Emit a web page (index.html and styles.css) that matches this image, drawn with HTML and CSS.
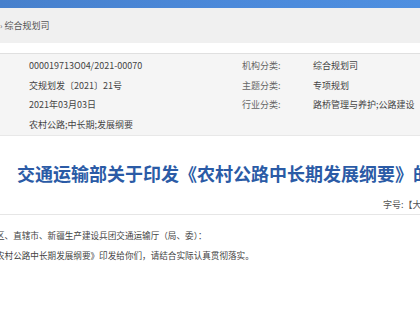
FILE: index.html
```html
<!DOCTYPE html>
<html lang="zh-CN">
<head>
    <meta charset="UTF-8">
    <meta name="viewport" content="width=device-width, initial-scale=1.0">
    <title>交通运输部关于印发《农村公路中长期发展纲要》的通知</title>
    <link rel="stylesheet" href="styles.css">
</head>
<body>
    <div class="topbar"></div>

    <div class="crumb">
        <span class="crumb-sep">›</span>
        <span>综合规划司</span>
    </div>

    <div class="meta">
        <div class="meta-col meta-left">
            <div class="meta-row"><span class="meta-val">000019713O04/2021-00070</span></div>
            <div class="meta-row"><span class="meta-val">交规划发〔2021〕21号</span></div>
            <div class="meta-row"><span class="meta-val">2021年03月03日</span></div>
            <div class="meta-row"><span class="meta-val">农村公路;中长期;发展纲要</span></div>
        </div>
        <div class="meta-col">
            <div class="meta-row"><span class="meta-label">机构分类:</span><span class="meta-val">综合规划司</span></div>
            <div class="meta-row"><span class="meta-label">主题分类:</span><span class="meta-val">专项规划</span></div>
            <div class="meta-row"><span class="meta-label">行业分类:</span><span class="meta-val">路桥管理与养护;公路建设</span></div>
        </div>
    </div>

    <div class="article">
        <h1 class="title">交通运输部关于印发《农村公路中长期发展纲要》的通知</h1>
        <div class="tools">字号:【大 中 小】</div>
        <div class="content">
            <p>各省、自治区、直辖市、新疆生产建设兵团交通运输厅（局、委）：</p>
            <p class="indent">现将《农村公路中长期发展纲要》印发给你们，请结合实际认真贯彻落实。</p>
        </div>
    </div>
</body>
</html>
```

FILE: styles.css
```css
html, body {
    overflow: hidden;
}
body {
    margin: 0;
    font-family: "Noto Sans CJK SC", "Noto Sans", sans-serif;
    color: #444;
    background: #fff;
}
.topbar {
    height: 8px;
    background: linear-gradient(to right, #4780cc, #4b89da 55%, #4e8fe0);
}
.crumb {
    height: 35px;
    display: flex;
    align-items: center;
    gap: 2px;
    background: #f0f0f0;
    font-size: 9px;
    color: #555;
}
.crumb-sep {
    font-size: 8px;
    color: #666;
}
.meta {
    margin-top: 10px;
    border-top: 1px solid #e0e0e0;
    border-bottom: 1px solid #e8e8e8;
    background: #f5f5f5;
    padding: 2px 0 1px 29px;
    display: flex;
    font-size: 9px;
    line-height: 19.6px;
}
.meta-left {
    width: 213px;
}
.meta-row {
    display: flex;
    white-space: nowrap;
}
.meta-label {
    width: 71px;
    color: #666;
}
.meta-val {
    color: #444;
}
.article {
    padding-top: 25px;
}
.title {
    margin: 0;
    padding-left: 17px;
    font-size: 18px;
    line-height: 24px;
    font-weight: bold;
    color: #2b5ba6;
    white-space: nowrap;
}
.tools {
    margin-top: 12px;
    padding-left: 383px;
    padding-bottom: 1px;
    border-bottom: 1px solid #e6e6e6;
    font-size: 9px;
    line-height: 16px;
    color: #555;
    white-space: nowrap;
}
.content {
    margin-top: 10px;
    margin-left: -47px;
    font-size: 8.6px;
    line-height: 20px;
    color: #444;
}
.content p {
    margin: 0;
    white-space: nowrap;
}
.content .indent {
    text-indent: 2em;
}
```
